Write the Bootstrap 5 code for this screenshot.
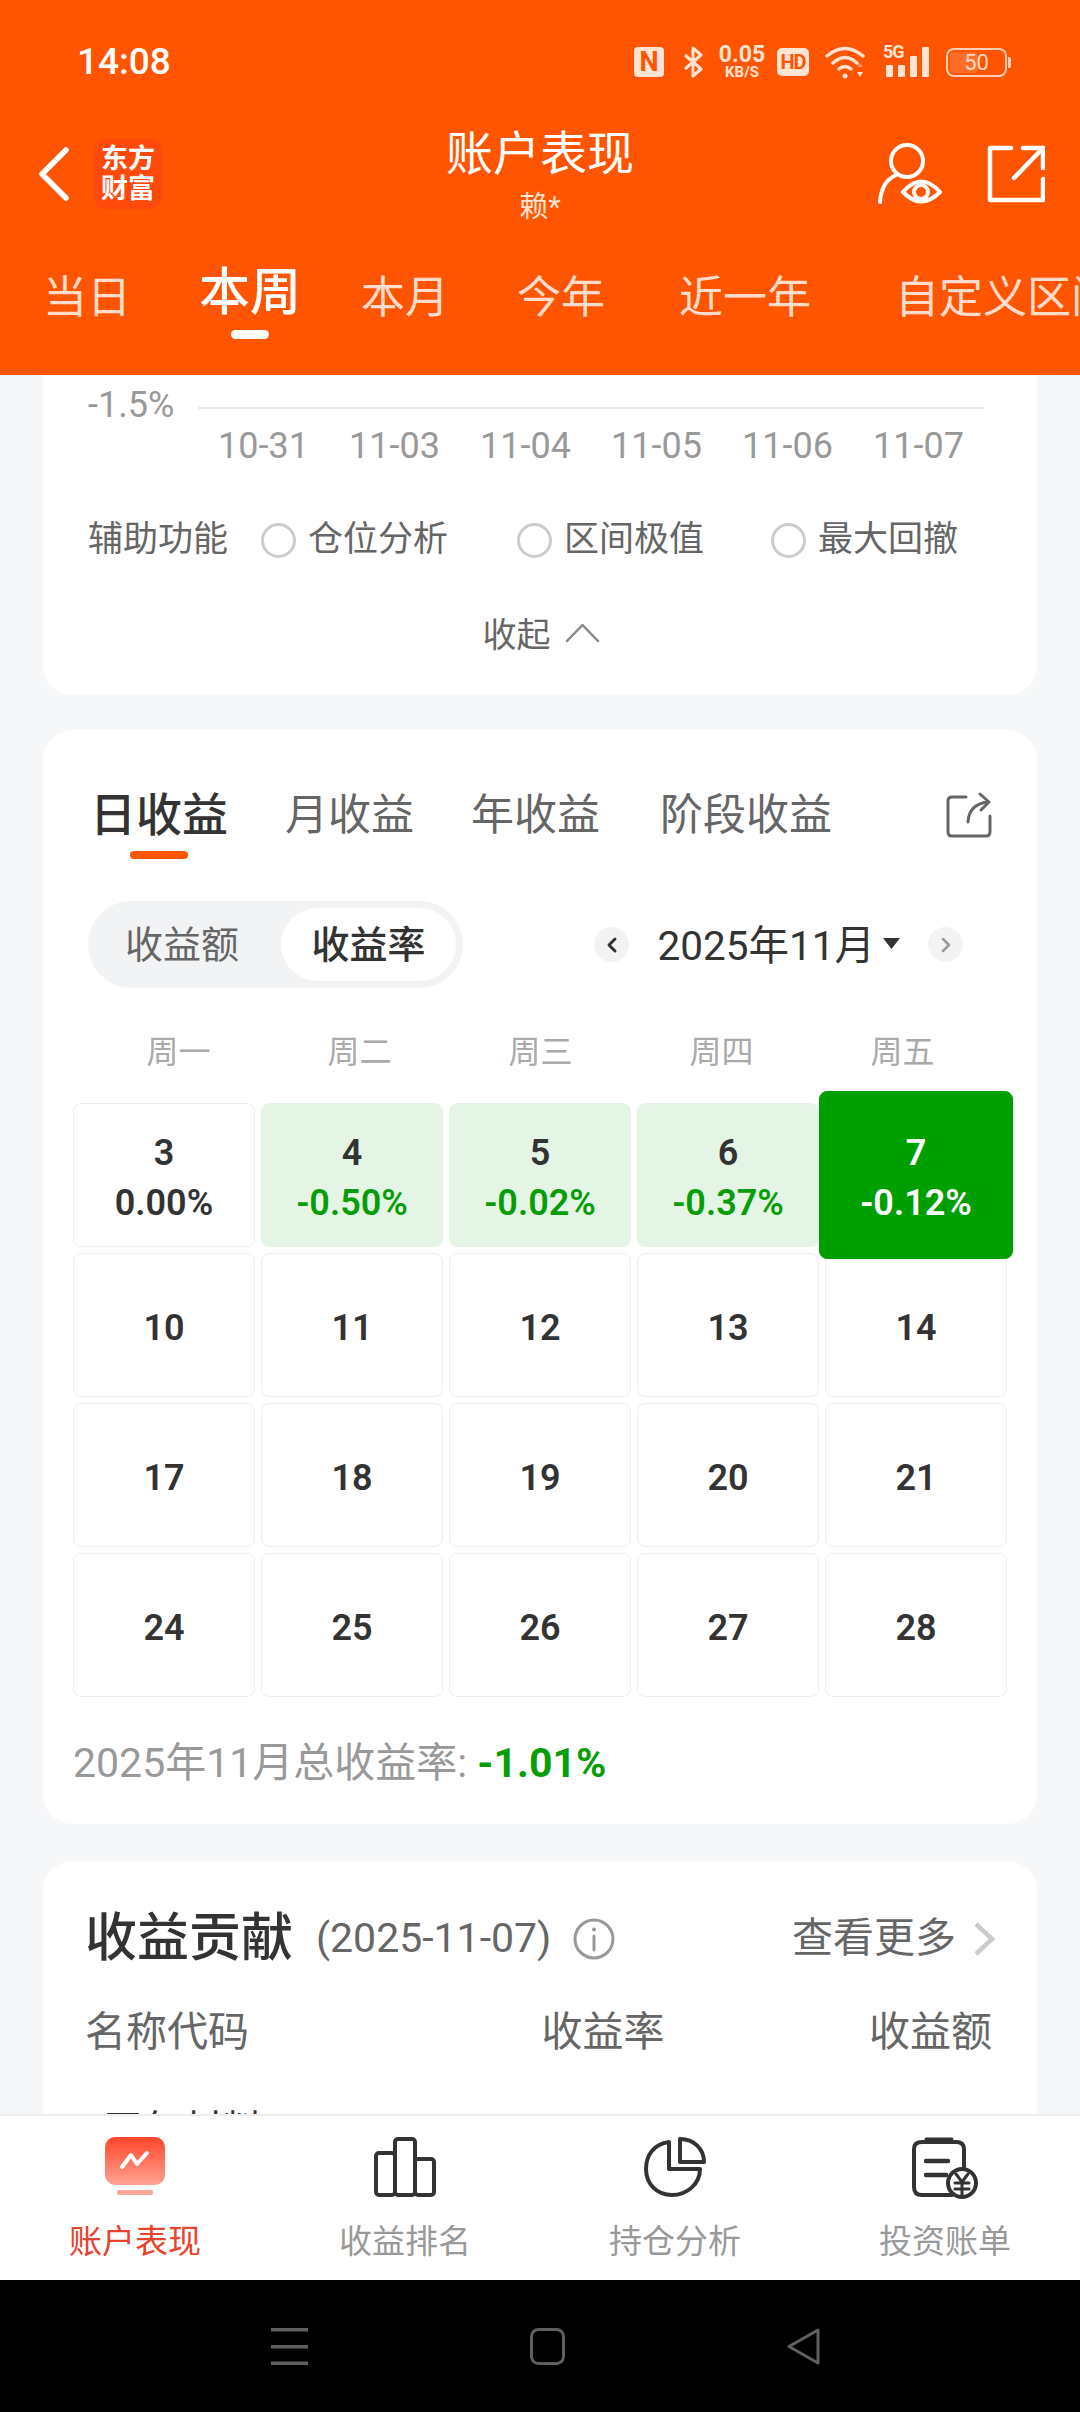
<!DOCTYPE html>
<html lang="zh-CN">
<head>
    <meta charset="UTF-8">
    <meta name="viewport" content="width=device-width, initial-scale=1.0">
    <title>账户表现</title>
    <link href="https://cdn.jsdelivr.net/npm/bootstrap@5.3.0/dist/css/bootstrap.min.css" rel="stylesheet">
    <style>
        body { width: 1080px; height: 2412px; overflow: hidden; background: #f6f7f9; color: #333; font-family: Roboto, "Noto Sans CJK SC", sans-serif; }
        .app-head { background: #ff5500; height: 375px; color: #fff; }
        .status-row { height: 124px; padding-left: 77px; color: #ffe3d3; }
        .status-time { font-size: 37px; font-weight: 500; color: #fff; margin-right: auto; }
        .nfc-box { width: 30px; height: 30px; background: #ffe3d3; color: #ff5500; border-radius: 4px; font-size: 27px; line-height: 30px; font-weight: 700; text-align: center; }
        .st-bt { margin-left: 19px; }
        .st-speed { margin-left: 13px; width: 50px; line-height: 1; text-align: center; font-weight: 700; }
        .st-speed b { display: block; font-size: 23px; line-height: 20px; font-weight: 700; }
        .st-speed i { display: block; font-size: 15px; line-height: 14px; font-style: normal; }
        .hd-box { margin-left: 10px; width: 32px; height: 28px; background: #ffe3d3; color: #ff5500; border-radius: 5px; font-size: 20px; line-height: 28px; font-weight: 700; text-align: center; letter-spacing: -1px; }
        .st-wifi { margin-left: 16px; }
        .st-net { margin-left: 16px; width: 46px; height: 32px; }
        .st-net span { left: 0; top: -3px; font-size: 18px; line-height: 18px; font-weight: 700; letter-spacing: -1px; }
        .batt-box { margin-left: 17px; margin-right: 73px; width: 61px; height: 29px; border: 2px solid #ffcfb5; border-radius: 8px; padding: 2px; }
        .batt-box::after { content: ""; position: absolute; right: -6px; top: 7px; width: 3px; height: 11px; background: #ffcfb5; border-radius: 0 2px 2px 0; }
        .batt-fill { background: #ff6e26; height: 100%; border-radius: 4px; }
        .batt-num { inset: 0; font-size: 22px; line-height: 25px; text-align: center; color: #ffd9c4; }
        .title-row { height: 99px; }
        .back-ico { margin-left: 38px; }
        .logo-tile { margin-left: 23px; width: 70px; height: 70px; background: #ff4a0c; border-radius: 14px; font-size: 27px; line-height: 30px; font-weight: 700; text-align: center; padding-top: 5px; }
        .title-main { left: 0; right: 0; top: 3px; text-align: center; }
        .title-main h1 { font-size: 47px; line-height: 54px; margin: 0 0 9px; font-weight: 400; }
        .title-main div { font-size: 29px; line-height: 34px; color: #ffe3d3; }
        .eye-ico { margin-left: auto; }
        .out-ico { margin-left: 45px; margin-right: 35px; }
        .range-strip { height: 152px; padding: 45px 0 0 43px; font-size: 44px; line-height: 60px; white-space: nowrap; overflow: hidden; color: #ffdccb; }
        .range-strip span { flex: none; }
        .range-strip .on { height: 60px; font-size: 51px; font-weight: 500; color: #fff; margin: -5px 0 0 68px; position: relative; }
        .range-strip .on::after { content: ""; position: absolute; left: 32px; top: 67px; width: 38px; height: 9px; background: #fff; border-radius: 5px; }
        .range-strip .g2 { margin-left: 60px; }
        .range-strip .g3 { margin-left: 68px; }
        .range-strip .g4 { margin-left: 74px; }
        .range-strip .g5 { margin-left: 84px; }
        .scroll-area { height: 1739px; overflow: hidden; }
        .panel { background: #fff; margin: 0 43px; border-radius: 30px; }
        .panel-top { height: 320px; border-radius: 0 0 30px 30px; padding: 10px 45px 0; color: #666; }
        .axis-label { font-size: 36px; line-height: 40px; color: #999; width: 110px; flex: none; }
        .axis-line { height: 2px; background: #e8eaf0; width: 787px; margin: 6px 0 0 0; flex: none; }
        .axis-dates { margin: 1px 0 0 110px; font-size: 36px; line-height: 40px; color: #999; }
        .axis-dates span { width: 131px; text-align: center; flex: none; }
        .aux-row { margin-top: 52px; font-size: 35px; line-height: 44px; }
        .aux-name { width: 173px; flex: none; }
        .ring { width: 35px; height: 35px; border: 3px solid #ccc; border-radius: 50%; flex: none; margin-right: 12px; }
        .aux-b { margin-left: 69px; }
        .aux-c { margin-left: 67px; }
        .fold-row { margin-top: 51px; padding-left: 2px; font-size: 34px; line-height: 44px; gap: 14px; }
        .fold-row svg { margin-bottom: 5px; }
        .panel-cal { margin-top: 35px; height: 1094px; padding: 55px 31px 0 30px; }
        .kind-tabs { font-size: 43px; line-height: 60px; color: #666; padding-left: 15px; }
        .kind-tabs .on { font-size: 46px; font-weight: 500; color: #333; position: relative; margin-left: 2px; }
        .kind-tabs .on::after { content: ""; position: absolute; left: 40px; top: 66px; width: 58px; height: 8px; border-radius: 4px; background: #ff5500; }
        .kind-b { margin-left: 57px; }
        .kind-c { margin-left: 57px; }
        .kind-d { margin-left: 60px; }
        .kind-share { margin-left: auto; margin-right: 14px; }
        .tools-row { margin-top: 56px; padding: 0 43px 0 15px; }
        .seg-box { height: 87px; width: 375px; background: #f2f3f5; padding: 7px; font-size: 38px; color: #666; }
        .seg-box div { line-height: 75px; text-align: center; }
        .seg-off { width: 186px; padding-right: 12px; }
        .seg-on { width: 175px; background: #fff; font-weight: 500; color: #333; }
        .arrow-dot { width: 35px; height: 35px; background: #f2f3f5; }
        .month-text { font-size: 40.5px; line-height: 50px; margin: 3px 8px 0 28px; }
        .caret-ico { margin: 0 28px 3px 0; }
        .week-row { margin-top: 44px; padding-left: 15px; width: 920px; font-size: 32px; line-height: 40px; color: #aaa; text-align: center; }
        .week-row span { width: 181px; }
        .day-grid { margin-top: 31px; display: grid; grid-template-columns: repeat(5, 182px); grid-auto-rows: 144px; column-gap: 6px; row-gap: 6px; }
        .day-cell { border: 1px solid #eee; border-radius: 8px; padding-top: 5px; font-size: 36px; line-height: 50px; font-weight: 600; text-align: center; }
        .day-cell b { font-weight: 600; }
        .day-down { background: #e5f5e5; border-color: #e5f5e5; }
        .day-down b { color: #079d07; }
        .day-now { background: #009f00; border-color: #009f00; color: #fff; margin: -12px -6px -12px -6px; position: relative; z-index: 1; }
        .month-sum { margin-top: 41px; font-size: 41px; line-height: 50px; color: #999; }
        .month-sum b { font-weight: 700; color: #079d07; }
        .panel-gain { margin-top: 37px; height: 400px; padding: 48px 45px 0 42px; }
        .gain-head { height: 60px; }
        .gain-head h2 { font-size: 52px; font-weight: 500; margin: 0; color: #333; }
        .gain-date { font-size: 41px; color: #666; margin-left: 23px; }
        .gain-more { margin-left: auto; margin-right: -3px; font-size: 41px; color: #666; gap: 17px; }
        .info-ico { margin-left: 22px; }
        .gain-cols { margin-top: 38px; font-size: 41px; line-height: 50px; color: #666; }
        .gain-rate { padding-right: 22px; }
        .gain-first { margin: 49px 0 0 18px; font-size: 40px; line-height: 50px; }
        .tab-bar { height: 166px; background: #fff; border-top: 2px solid #eee; font-size: 33px; line-height: 40px; color: #999; }
        .tab-bar .col-3 { height: 164px; padding-top: 21px; }
        .tab-bar .ico-slot { height: 66px; }
        .tab-bar p { margin: 19px 0 0; }
        .tab-bar .on { color: #e8432c; }
        .sys-bar { height: 132px; background: #000; gap: 222px; padding-left: 271px; }
    </style>
</head>
<body>
    <header class="app-head">
        <div class="status-row d-flex align-items-center">
            <span class="status-time">14:08</span>
            <span class="nfc-box">N</span>
            <svg class="st-bt" width="21" height="32" viewBox="0 0 21 32" fill="none" stroke="#ffe3d3" stroke-width="3" stroke-linejoin="round"><path d="M2 9 L18 23 L10 30 V2 L18 9 L2 23"/></svg>
            <span class="st-speed"><b>0.05</b><i>KB/S</i></span>
            <span class="hd-box">HD</span>
            <svg class="st-wifi" width="42" height="34" viewBox="0 0 42 34" fill="none" stroke="#ffe3d3" stroke-width="3.5" stroke-linecap="round"><path d="M2 11 Q20 -4 38 11"/><path d="M8 18 Q20 7 32 18"/><path d="M14 24 Q20 19 26 24"/><circle cx="20" cy="31" r="2.5" fill="#ffe3d3" stroke="none"/><path d="M32 22 L35 18 L38 22 Z" fill="#ff9a66" stroke="none"/><path d="M32 27 L38 27 L35 32 Z" fill="#ffe3d3" stroke="none"/></svg>
            <div class="st-net position-relative">
                <span class="position-absolute">5G</span>
                <svg class="position-absolute" style="left:3px;top:0" width="43" height="32" viewBox="0 0 43 32" fill="#ffe3d3"><rect x="0" y="19" width="7" height="12" rx="1"/><rect x="12" y="19" width="7" height="12" rx="1"/><rect x="24" y="10" width="7" height="21" rx="1"/><rect x="36" y="1" width="7" height="30" rx="1"/></svg>
            </div>
            <div class="batt-box position-relative">
                <div class="batt-fill" style="width:52%"></div>
                <span class="batt-num position-absolute">50</span>
            </div>
        </div>
        <div class="title-row d-flex align-items-center position-relative">
            <svg class="back-ico" width="32" height="54" viewBox="0 0 32 54" fill="none" stroke="#fff" stroke-width="5.5" stroke-linecap="round" stroke-linejoin="round"><path d="M28 3 L4 27 L28 51"/></svg>
            <div class="logo-tile">东方<br>财富</div>
            <div class="title-main position-absolute">
                <h1>账户表现</h1>
                <div>赖*</div>
            </div>
            <svg class="eye-ico" width="64" height="64" viewBox="0 0 64 64" fill="none" stroke="#fff" stroke-width="4" stroke-linecap="round"><circle cx="29" cy="19" r="16"/><path d="M18 33 C9 37 3 46 2 60"/><path d="M25 51 Q43 30 62 51 Q43 70 25 51 Z" transform="translate(0 -1)" fill="#ff5500"/><circle cx="43" cy="50" r="7"/></svg>
            <svg class="out-ico" width="58" height="58" viewBox="0 0 58 58" fill="none" stroke="#fff" stroke-width="4.5" stroke-linecap="round" stroke-linejoin="round"><path d="M24 3 H3 V55 H56 V34"/><path d="M27 33 L56 3"/><path d="M36 3 H56 V23"/></svg>
        </div>
        <div class="range-strip d-flex align-items-start">
            <span>当日</span>
            <span class="on">本周</span>
            <span class="g2">本月</span>
            <span class="g3">今年</span>
            <span class="g4">近一年</span>
            <span class="g5">自定义区间</span>
        </div>
    </header>

    <main class="scroll-area">
        <section class="panel panel-top">
            <div class="d-flex align-items-center">
                <span class="axis-label">-1.5%</span>
                <div class="axis-line"></div>
            </div>
            <div class="axis-dates d-flex">
                <span>10-31</span><span>11-03</span><span>11-04</span><span>11-05</span><span>11-06</span><span>11-07</span>
            </div>
            <div class="aux-row d-flex align-items-center">
                <span class="aux-name">辅助功能</span>
                <i class="ring"></i><span>仓位分析</span>
                <i class="ring aux-b"></i><span>区间极值</span>
                <i class="ring aux-c"></i><span>最大回撤</span>
            </div>
            <div class="fold-row d-flex align-items-center justify-content-center">
                <span>收起</span>
                <svg width="35" height="20" viewBox="0 0 35 20" fill="none" stroke="#888" stroke-width="2.5" stroke-linecap="round" stroke-linejoin="round"><path d="M2 18 L17.5 2 L33 18"/></svg>
            </div>
        </section>

        <section class="panel panel-cal">
            <div class="kind-tabs d-flex align-items-center">
                <span class="on">日收益</span>
                <span class="kind-b">月收益</span>
                <span class="kind-c">年收益</span>
                <span class="kind-d">阶段收益</span>
                <svg class="kind-share" width="46" height="46" viewBox="0 0 46 46" fill="none" stroke="#666" stroke-width="3" stroke-linecap="round" stroke-linejoin="round"><path d="M20 5 H6 Q2 5 2 9 V40 Q2 44 6 44 H40 Q44 44 44 40 V24"/><path d="M22 30 Q23 12 42 10"/><path d="M34 2 L43 10 L35 18"/></svg>
            </div>
            <div class="tools-row d-flex align-items-center">
                <div class="seg-box d-flex rounded-pill">
                    <div class="seg-off">收益额</div>
                    <div class="seg-on rounded-pill">收益率</div>
                </div>
                <div class="arrow-dot rounded-circle ms-auto d-flex align-items-center justify-content-center">
                    <svg width="12" height="18" viewBox="0 0 12 18" fill="none" stroke="#333" stroke-width="3" stroke-linecap="round" stroke-linejoin="round"><path d="M9 3 L3 9 L9 15"/></svg>
                </div>
                <span class="month-text">2025年11月</span>
                <svg class="caret-ico" width="17" height="11" viewBox="0 0 17 11" fill="#333"><path d="M0 0 H17 L8.5 11 Z"/></svg>
                <div class="arrow-dot rounded-circle d-flex align-items-center justify-content-center">
                    <svg width="12" height="18" viewBox="0 0 12 18" fill="none" stroke="#999" stroke-width="2.5" stroke-linecap="round" stroke-linejoin="round"><path d="M3 3 L9 9 L3 15"/></svg>
                </div>
            </div>
            <div class="week-row d-flex">
                <span>周一</span><span>周二</span><span>周三</span><span>周四</span><span>周五</span>
            </div>
            <div class="day-grid">
                <div class="day-cell d-flex flex-column justify-content-center"><div>3</div><b>0.00%</b></div>
                <div class="day-cell day-down d-flex flex-column justify-content-center"><div>4</div><b>-0.50%</b></div>
                <div class="day-cell day-down d-flex flex-column justify-content-center"><div>5</div><b>-0.02%</b></div>
                <div class="day-cell day-down d-flex flex-column justify-content-center"><div>6</div><b>-0.37%</b></div>
                <div class="day-cell day-now d-flex flex-column justify-content-center"><div>7</div><b>-0.12%</b></div>
                <div class="day-cell d-flex flex-column justify-content-center">10</div>
                <div class="day-cell d-flex flex-column justify-content-center">11</div>
                <div class="day-cell d-flex flex-column justify-content-center">12</div>
                <div class="day-cell d-flex flex-column justify-content-center">13</div>
                <div class="day-cell d-flex flex-column justify-content-center">14</div>
                <div class="day-cell d-flex flex-column justify-content-center">17</div>
                <div class="day-cell d-flex flex-column justify-content-center">18</div>
                <div class="day-cell d-flex flex-column justify-content-center">19</div>
                <div class="day-cell d-flex flex-column justify-content-center">20</div>
                <div class="day-cell d-flex flex-column justify-content-center">21</div>
                <div class="day-cell d-flex flex-column justify-content-center">24</div>
                <div class="day-cell d-flex flex-column justify-content-center">25</div>
                <div class="day-cell d-flex flex-column justify-content-center">26</div>
                <div class="day-cell d-flex flex-column justify-content-center">27</div>
                <div class="day-cell d-flex flex-column justify-content-center">28</div>
            </div>
            <div class="month-sum">2025年11月总收益率: <b>-1.01%</b></div>
        </section>

        <section class="panel panel-gain">
            <div class="gain-head d-flex align-items-center">
                <h2>收益贡献</h2>
                <span class="gain-date">(2025-11-07)</span>
                <svg class="info-ico" width="42" height="42" viewBox="0 0 42 42" fill="none" stroke="#999" stroke-width="3"><circle cx="21" cy="21" r="19"/><path d="M21 18 V32" stroke-linecap="round"/><circle cx="21" cy="11.5" r="2" fill="#999" stroke="none"/></svg>
                <span class="gain-more d-flex align-items-center">查看更多
                    <svg width="22" height="34" viewBox="0 0 22 34" fill="none" stroke="#ccc" stroke-width="4.5"><path d="M3 2 L19 17 L3 32"/></svg>
                </span>
            </div>
            <div class="gain-cols row g-0">
                <div class="col-5">名称代码</div>
                <div class="col-4 gain-rate text-center">收益率</div>
                <div class="col-3 text-end">收益额</div>
            </div>
            <div class="gain-first">天年材料</div>
        </section>
    </main>

    <footer class="tab-bar row g-0 text-center">
        <div class="col-3 on">
            <div class="ico-slot">
                <svg width="60" height="58" viewBox="0 0 60 58"><defs><linearGradient id="tabGrad" x1="0" y1="0" x2="0" y2="1"><stop offset="0" stop-color="#ff4528"/><stop offset="1" stop-color="#ffa393"/></linearGradient></defs><rect x="0" y="0" width="60" height="48" rx="10" fill="url(#tabGrad)"/><rect x="12" y="53" width="36" height="5" rx="2" fill="#f9a797"/><path d="M17 30 L26 18 L32 27 L42 16" fill="none" stroke="#fff" stroke-width="4" stroke-linecap="round" stroke-linejoin="round"/></svg>
            </div>
            <p>账户表现</p>
        </div>
        <div class="col-3">
            <div class="ico-slot">
                <svg width="62" height="60" viewBox="0 0 62 60" fill="none" stroke="#333" stroke-width="4" stroke-linejoin="round"><rect x="2" y="16" width="19" height="42" rx="3"/><rect x="21" y="2" width="20" height="56" rx="3"/><rect x="41" y="22" width="19" height="36" rx="3"/></svg>
            </div>
            <p>收益排名</p>
        </div>
        <div class="col-3">
            <div class="ico-slot">
                <svg width="62" height="60" viewBox="0 0 62 60" fill="none" stroke="#333" stroke-width="4" stroke-linejoin="round" stroke-linecap="round"><path d="M25 5 C10 7 2 18 2 32 C2 47 13 58 28 58 C43 58 56 47 56 32 H25 Z"/><path d="M36 2 C50 2 60 12 60 25 H36 Z"/></svg>
            </div>
            <p>持仓分析</p>
        </div>
        <div class="col-3">
            <div class="ico-slot">
                <svg width="66" height="62" viewBox="0 0 66 62" fill="none" stroke="#333" stroke-width="4" stroke-linecap="round"><path d="M40 58 H10 Q2 58 2 50 V12 Q2 5 10 5 H44 Q52 5 52 12 V32"/><path d="M14 2 H40" stroke-width="3"/><path d="M14 24 H36 M14 38 H34" stroke-width="4.5"/><circle cx="50" cy="46" r="14" fill="#fff"/><path d="M44 37 L50 45 L56 37 M43 46 H57 M43 52 H57 M50 45 V58" stroke-width="3"/></svg>
            </div>
            <p>投资账单</p>
        </div>
    </footer>

    <nav class="sys-bar d-flex align-items-center">
        <svg width="37" height="37" viewBox="0 0 37 37" fill="#5f5f5f"><rect y="0" width="37" height="3.5"/><rect y="17" width="37" height="3.5"/><rect y="33.5" width="37" height="3.5"/></svg>
        <svg width="35" height="37" viewBox="0 0 35 37" fill="none" stroke="#5f5f5f" stroke-width="3"><rect x="1.5" y="1.5" width="32" height="34" rx="7"/></svg>
        <svg width="33" height="37" viewBox="0 0 33 37" fill="none" stroke="#5f5f5f" stroke-width="3" stroke-linejoin="round"><path d="M31 2 V35 L2 18.5 Z"/></svg>
    </nav>
    <script src="https://cdn.jsdelivr.net/npm/bootstrap@5.3.0/dist/js/bootstrap.bundle.min.js"></script>
</body>
</html>
